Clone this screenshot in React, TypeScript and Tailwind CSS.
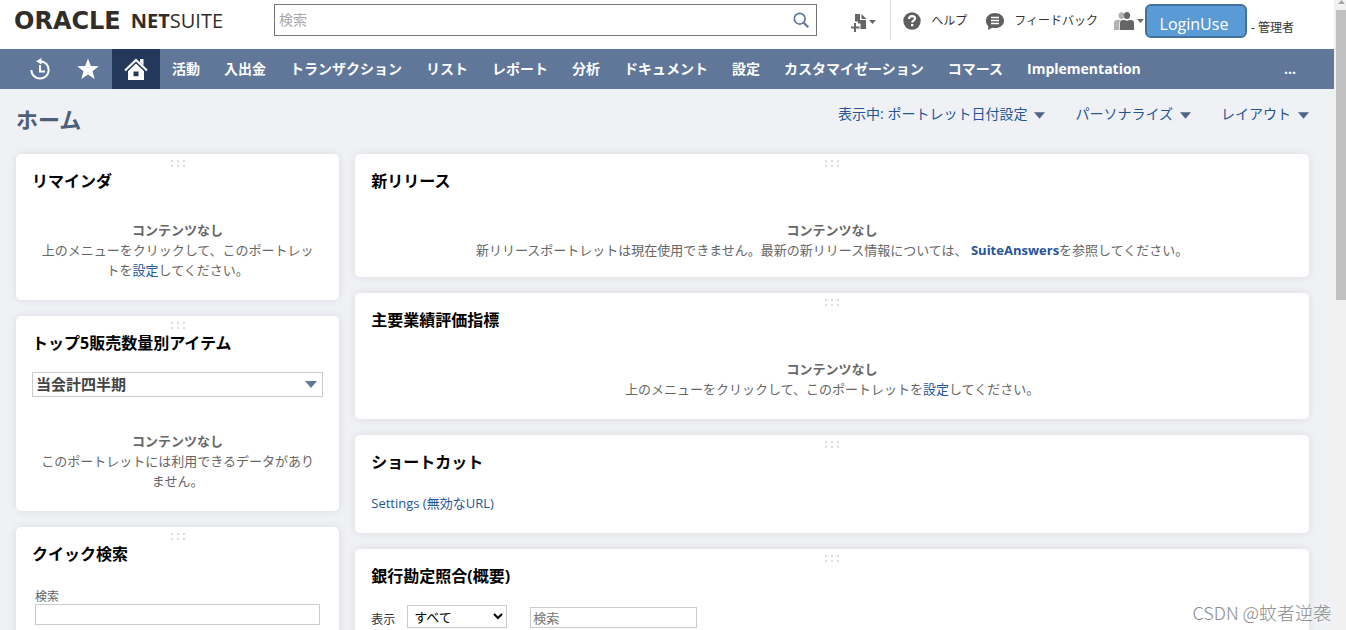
import React from 'react';

interface PortletProps {
  title: string;
  className?: string;
  children: React.ReactNode;
}

interface EmptyStateProps {
  className?: string;
  children: React.ReactNode;
}

const navItems: string[] = [
  '活動',
  '入出金',
  'トランザクション',
  'リスト',
  'レポート',
  '分析',
  'ドキュメント',
  '設定',
  'カスタマイゼーション',
  'コマース',
  'Implementation',
];

const pageMenus: string[] = ['表示中: ポートレット日付設定', 'パーソナライズ', 'レイアウト'];

const Caret: React.FC<{ className?: string }> = ({ className = '' }) => (
  <svg className={className} viewBox="0 0 12 7" fill="currentColor" aria-hidden="true">
    <path d="M0 0h12L6 7z" />
  </svg>
);

const DragHandle: React.FC = () => (
  <svg
    className="absolute top-1.5 left-1/2 h-[7px] w-[14px] -translate-x-1/2 text-[#dcdcdc]"
    viewBox="0 0 14 7"
    fill="currentColor"
    shapeRendering="crispEdges"
    aria-hidden="true"
  >
    <path d="M0 0h2v2H0zM6 0h2v2H6zM12 0h2v2h-2zM0 5h2v2H0zM6 5h2v2H6zM12 5h2v2h-2z" />
  </svg>
);

const Portlet: React.FC<PortletProps> = ({ title, className = '', children }) => (
  <section
    className={`relative rounded-[5px] bg-white px-4 pt-[15px] pb-5 shadow-[0_0_8px_rgba(0,0,0,0.09)] ${className}`}
  >
    <DragHandle />
    <h2 className="text-base leading-6 font-bold text-black">{title}</h2>
    {children}
  </section>
);

const EmptyState: React.FC<EmptyStateProps> = ({ className = '', children }) => (
  <div className={`px-2 text-center text-[13px] leading-5 text-[#666] ${className}`}>
    <p className="font-bold">コンテンツなし</p>
    <p>{children}</p>
  </div>
);

const Header: React.FC = () => (
  <header className="flex h-[49px] items-start bg-white">
    <a href="#home" className="flex h-[42px] w-[274px] shrink-0 items-center gap-2.5 pl-[14px] text-[#312d2a]">
      <span className="font-['DejaVu_Sans'] text-[24px] leading-6 font-bold">ORACLE</span>
      <span className="text-[20px] leading-6">
        <b>NET</b>
        <span className="font-normal">SUITE</span>
      </span>
    </a>

    {/* Global search */}
    <div className="relative mt-1 min-w-0 flex-1">
      <input
        type="text"
        aria-label="検索"
        placeholder="検索"
        className="h-8 w-full border border-[#757575] bg-white px-1 pb-0.5 text-sm placeholder:text-[#a9a9a9]"
      />
      <button type="button" aria-label="検索を実行" className="absolute top-2 right-2 text-[#607799]">
        <svg className="h-4 w-4" viewBox="0 0 16 16" fill="none" stroke="currentColor">
          <circle cx="6.7" cy="6.7" r="5.4" strokeWidth="1.7" />
          <path d="M10.7 10.7l4.5 4.5" strokeWidth="2.2" />
        </svg>
      </button>
    </div>

    <div className="flex shrink-0 items-start pl-[34px] text-xs leading-5 text-[#333]">
      <button type="button" aria-label="新規作成" className="mt-3 flex h-5 w-[39px] items-center text-[#666]">
        <svg className="h-5 w-[18px]" viewBox="0 0 18 20" fill="currentColor">
          <path d="M4 2h5v6h6v9H9.500v-5.500H7V9.500H4z" />
          <path d="M10.500 2l5 5h-5z" />
          <path d="M3 11h2v3.500h3.500v2H5V20H3v-3.500H0v-2h3z" />
        </svg>
        <Caret className="mb-px h-1 w-[7px]" />
      </button>
      <span className="h-10 w-px bg-[#ddd]" />
      <a href="#help" className="mt-[11px] ml-3 flex items-center gap-2.5">
        <svg className="h-[18px] w-[18px]" viewBox="0 0 18 18">
          <circle cx="9" cy="9" r="8.7" fill="#5f5f5f" />
          <path d="M6.1 7.1c0-2 1.2-3 3-3 1.700 0 2.900 1 2.900 2.500 0 2.100-2.800 2-2.800 4" fill="none" stroke="#fff" strokeWidth="2.200" />
          <path d="M8 12h2.300v2.300H8z" fill="#fff" />
        </svg>
        ヘルプ
      </a>
      <a href="#feedback" className="mt-[11px] ml-[19px] flex items-center gap-2.5">
        <svg className="h-[18px] w-[18px]" viewBox="0 0 18 18">
          <path d="M9 1c5 0 9 3.300 9 7.700S14 16 9 16c-1 0-2-.1-2.800-.3L2.200 18v-4C.8 12.600 0 10.800 0 8.700 0 4.300 4 1 9 1z" fill="#5f5f5f" />
          <path d="M5 5.500h8M5 8.500h8M5 11.500h8" stroke="#fff" strokeWidth="1.400" />
        </svg>
        フィードバック
      </a>
      <button type="button" aria-label="役割の変更" className="mt-[11px] ml-4 flex h-5 items-center">
        <svg className="h-[18px] w-5" viewBox="0 0 20 18">
          <g fill="#b3b3b3">
            <ellipse cx="7.500" cy="3.600" rx="3" ry="3.400" />
            <path d="M0 18v-7c0-2 1-3 3-3h5v10z" />
          </g>
          <path d="M5.300 18v-7c0-2.300 1.200-3.500 3.200-3.500L13 9z" fill="#fff" />
          <g fill="#666">
            <ellipse cx="13" cy="3.600" rx="3.100" ry="3.500" />
            <path d="M6 18v-7c0-2 1-3 3-3h1.500c1.500 1 3.500 1 5 0H17c2 0 3 1 3 3v7z" />
          </g>
        </svg>
        <Caret className="ml-[3px] h-1 w-[7px] text-[#666]" />
      </button>
      <button
        type="button"
        className="mt-1 ml-px h-[34px] w-[102px] rounded-md border-2 border-[#41719c] bg-[#5b9bd5] pt-1.5 pr-1 text-base leading-6 text-white"
      >
        LoginUse
      </button>
      <span className="mt-[18px] ml-1 w-[83px]">- 管理者</span>
    </div>
  </header>
);

const NavBar: React.FC = () => (
  <nav className="flex h-10 items-stretch bg-[#607799] pl-4 text-sm font-bold text-white">
    <a href="#recent" aria-label="最近のレコード" className="flex w-12 items-center justify-center">
      <svg className="h-[22px] w-[22px]" viewBox="0 0 22 22" fill="none" stroke="currentColor">
        <path d="M11.500 3.200A8.700 8.700 0 1 1 2.300 12" strokeWidth="2" />
        <path d="M11 7v6.500h5" strokeWidth="2" />
        <path d="M12.500 0v6.400L7 3.200z" fill="currentColor" stroke="none" />
      </svg>
    </a>
    <a href="#shortcuts" aria-label="ショートカット" className="flex w-12 items-center justify-center">
      <svg className="h-[22px] w-[22px]" viewBox="0 0 22 22" fill="currentColor">
        <path d="M11 .5l2.800 7.600 8 .2-6.300 5 2.200 7.700L11 16.500 4.300 21l2.200-7.700-6.300-5 8-.2z" />
      </svg>
    </a>
    <a href="#home" aria-label="ホーム" className="flex w-12 items-center justify-center bg-[#24385b]">
      <svg className="h-[22px] w-6" viewBox="0 0 24 22">
        <path d="M1 12.500L12 2l11 10.500" fill="none" stroke="currentColor" strokeWidth="2.200" />
        <path d="M16 1h3.500v6.500L16 4.200z" fill="currentColor" />
        <path d="M12 5.500l8 7.700V22H4v-8.800zM9.500 13.500v4.800h5v-4.800z" fill="currentColor" fillRule="evenodd" />
      </svg>
    </a>
    {navItems.map((item) => (
      <a key={item} href="#menu" className="flex items-center px-3 whitespace-nowrap">
        {item}
      </a>
    ))}
    <button type="button" aria-label="その他" className="mr-[26px] ml-auto px-3">
      ...
    </button>
  </nav>
);

const App: React.FC = () => {
  return (
    <div className="relative flex h-screen overflow-hidden bg-[#eff1f5] font-['Open_Sans','Noto_Sans_CJK_JP',sans-serif]" lang="ja">
      <div className="min-w-0 flex-1">
        <Header />
        <NavBar />

        {/* Page title */}
        <div className="flex h-[65px] items-start pr-[25px] pl-4">
          <h1 className="mt-3.5 text-[22px] leading-8 font-bold text-[#4d5f79]">ホーム</h1>
          <div className="mt-[15px] ml-auto flex gap-[30px]">
            {pageMenus.map((menu) => (
              <button key={menu} type="button" className="flex items-center gap-[7px] text-sm leading-5 text-[#255599]">
                {menu}
                <Caret className="mt-0.5 h-[7px] w-[11px] text-[#4f6587]" />
              </button>
            ))}
          </div>
        </div>

        <main className="flex items-start pr-[25px] pl-4">
          {/* Left column */}
          <div className="flex w-1/4 shrink-0 flex-col gap-4">
            <Portlet title="リマインダ">
              <EmptyState className="mt-[27px]">
                上のメニューをクリックして、このポートレットを
                <a href="#setup" className="text-[#255599]">設定</a>
                してください。
              </EmptyState>
            </Portlet>

            <Portlet title="トップ5販売数量別アイテム">
              <div className="relative mt-[17px]">
                <select
                  aria-label="期間"
                  className="block h-[25px] w-full appearance-none border border-[#ccc] bg-white pb-0.5 pl-[3px] text-[15px] leading-5 font-semibold text-[#444]"
                >
                  <option>当会計四半期</option>
                </select>
                <Caret className="pointer-events-none absolute top-[9px] right-1.5 h-[7px] w-3 text-[#607799]" />
              </div>
              <EmptyState className="mt-[34px]">このポートレットには利用できるデータがありません。</EmptyState>
            </Portlet>

            <Portlet title="クイック検索">
              <div className="mx-[3px] mt-6">
                <label htmlFor="quick-search" className="block text-xs leading-[14px] text-[#666]">
                  検索
                </label>
                <input id="quick-search" type="text" className="block h-[21px] w-full border border-[#ccc] px-1 text-[13px]" />
              </div>
            </Portlet>
          </div>

          {/* Main column */}
          <div className="ml-4 flex min-w-0 flex-1 flex-col gap-4">
            <Portlet title="新リリース">
              <EmptyState className="mt-[27px] -mb-[3px]">
                新リリースポートレットは現在使用できません。最新の新リリース情報については、{' '}
                <a href="#suiteanswers" className="font-bold text-[#255599]">SuiteAnswers</a>
                を参照してください。
              </EmptyState>
            </Portlet>

            <Portlet title="主要業績評価指標">
              <EmptyState className="mt-[27px]">
                上のメニューをクリックして、このポートレットを
                <a href="#setup" className="text-[#255599]">設定</a>
                してください。
              </EmptyState>
            </Portlet>

            <Portlet title="ショートカット">
              <a href="#settings" className="mt-[19px] block text-[13px] leading-5 text-[#255599]">
                Settings (無効なURL)
              </a>
            </Portlet>

            <Portlet title="銀行勘定照合(概要)">
              <div className="mt-[17px] flex items-end pb-10 text-[#333]">
                <label htmlFor="bank-view" className="w-9 text-xs leading-4">
                  表示
                </label>
                <select id="bank-view" className="h-[23px] w-[100px] border border-[#ccc] bg-white pl-0.5 text-[13px] text-black">
                  <option>すべて</option>
                </select>
                <input
                  type="text"
                  aria-label="口座を検索"
                  placeholder="検索"
                  className="ml-[23px] h-[21px] w-[167px] border border-[#ccc] px-0.5 text-[13px] placeholder:text-[#757575]"
                />
              </div>
            </Portlet>
          </div>
        </main>
      </div>

      {/* Scrollbar */}
      <div className="h-full w-3 shrink-0 bg-[#f1f1f1] pl-0.5">
        <div className="flex h-2.5 items-start justify-center">
          <Caret className="h-1 w-[7px] rotate-180 text-[#a3a3a3]" />
        </div>
        <div className="h-[46%] bg-[#c1c1c1]" />
      </div>

      <span className="absolute right-[15px] bottom-1 font-['Noto_Sans_CJK_SC',sans-serif] text-lg leading-7 font-light text-[#8a8a8a]">
        CSDN @蚊者逆袭
      </span>
    </div>
  );
};

export default App;
